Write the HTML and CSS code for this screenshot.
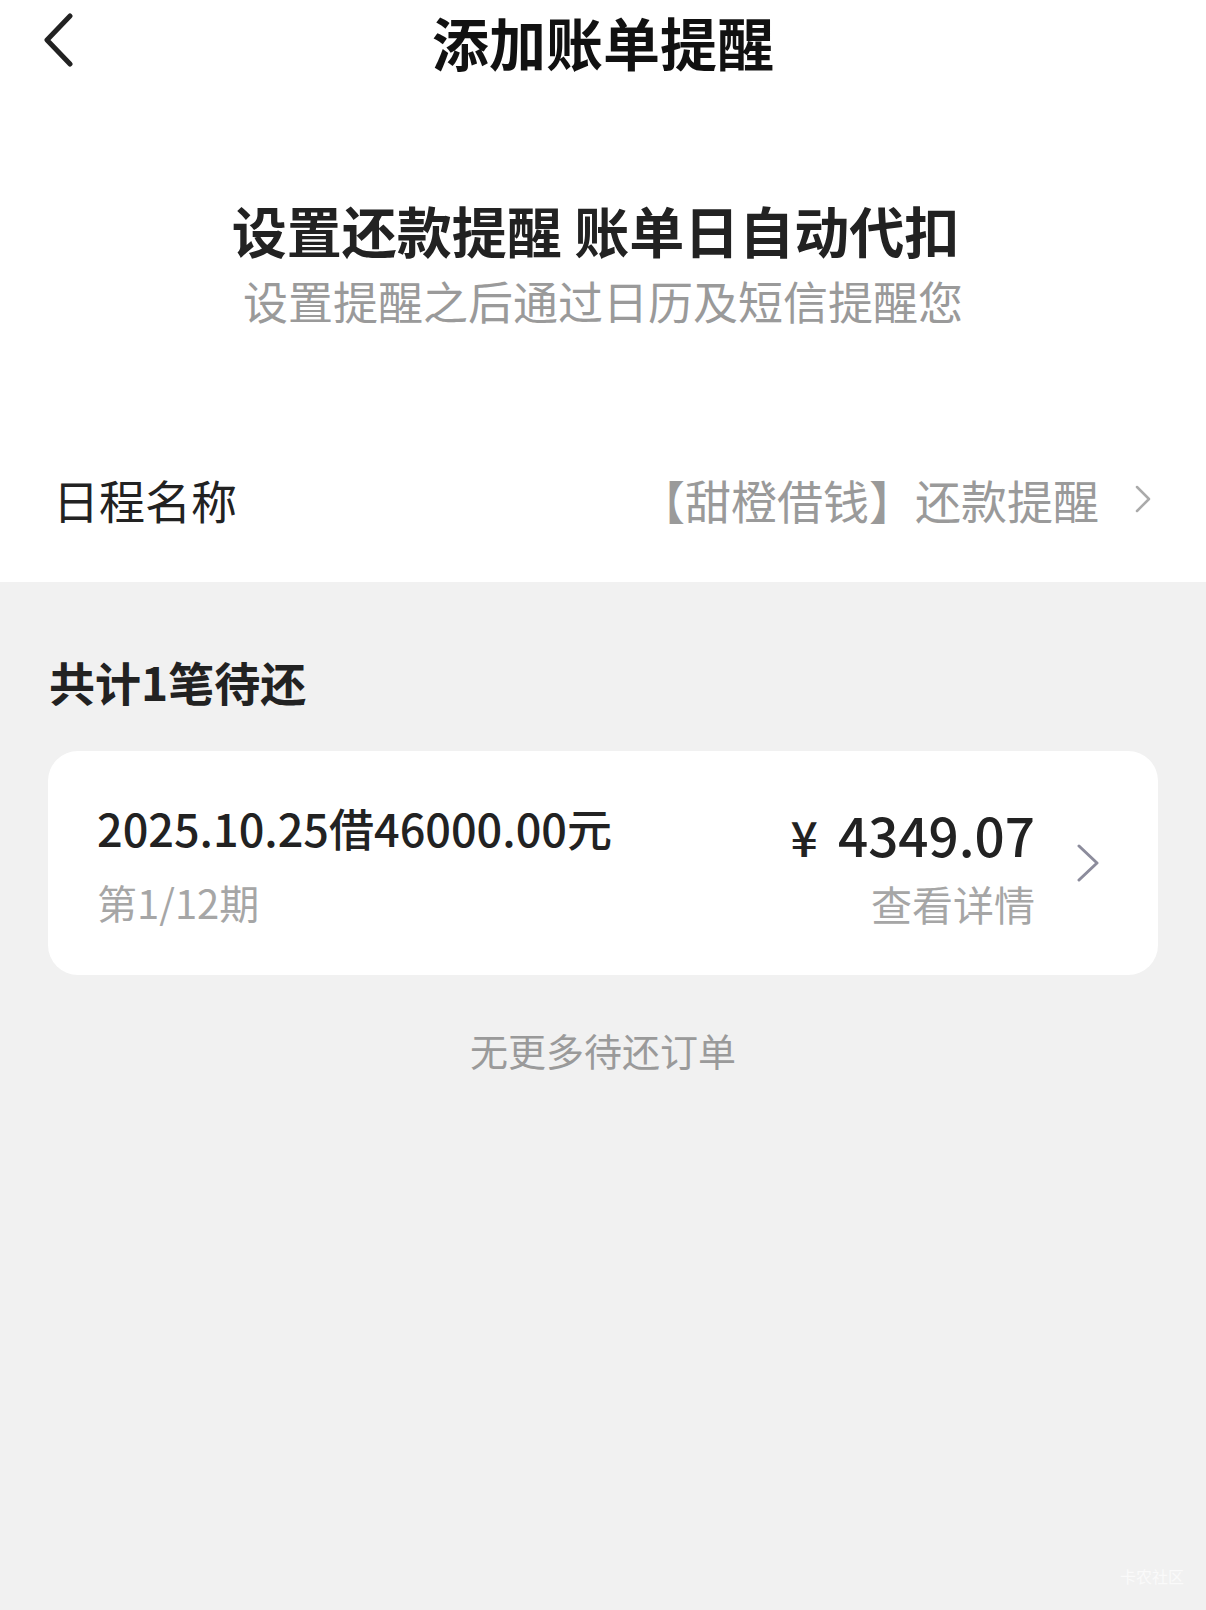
FILE: index.html
```html
<!DOCTYPE html>
<html lang="zh-CN">
<head>
<meta charset="utf-8">
<title>添加账单提醒</title>
<link rel="stylesheet" href="styles.css">
</head>
<body>
<div class="page">
  <section class="top">
    <header class="nav">
      <svg class="back" width="32" height="54" viewBox="0 0 32 54"><path d="M28 3 L5 27 L28 51" fill="none" stroke="#222" stroke-width="5" stroke-linecap="round" stroke-linejoin="round"/></svg>
      <h1 class="nav-title">添加账单提醒</h1>
    </header>
    <div class="hero">
      <h2 class="hero-title">设置还款提醒 账单日自动代扣</h2>
      <p class="hero-sub">设置提醒之后通过日历及短信提醒您</p>
    </div>
    <div class="row">
      <span class="row-label">日程名称</span>
      <span class="row-value">【甜橙借钱】还款提醒</span>
      <svg class="row-arrow" width="16" height="28" viewBox="0 0 16 28"><path d="M2 2 L14 14 L2 26" fill="none" stroke="#aaa" stroke-width="2.5" stroke-linecap="round" stroke-linejoin="round"/></svg>
    </div>
  </section>
  <section class="list">
    <h3 class="list-title">共计1笔待还</h3>
    <div class="card">
      <div class="card-left">
        <div class="card-main">2025.10.25借46000.00元</div>
        <div class="card-sub">第1/12期</div>
      </div>
      <div class="card-right">
        <div class="card-amount"><span class="yen">¥</span>4349.07</div>
        <div class="card-detail">查看详情</div>
      </div>
      <svg class="card-arrow" width="24" height="38" viewBox="0 0 24 38"><path d="M3 2 L21 19 L3 36" fill="none" stroke="#8c8c9c" stroke-width="3" stroke-linecap="round" stroke-linejoin="round"/></svg>
    </div>
    <p class="list-end">无更多待还订单</p>
  </section>
  <div class="watermark">卡农社区</div>
</div>
</body>
</html>
```

FILE: styles.css
```css
* { box-sizing: border-box; }
html, body { margin: 0; padding: 0; }
body {
  background: #f1f1f1;
  font-family: "Noto Sans CJK SC", "Noto Sans", sans-serif;
  color: #222;
}
.page {
  position: relative;
  min-height: 1610px;
  background: #f1f1f1;
}
.top {
  background: #fff;
  padding-bottom: 4px;
}
.nav {
  position: relative;
  height: 90px;
  display: flex;
  align-items: flex-start;
  justify-content: center;
}
.back {
  position: absolute;
  left: 42px;
  top: 13px;
}
.nav-title {
  margin: 0;
  font-size: 57px;
  line-height: 82px;
  font-weight: 700;
  color: #111;
}
.hero {
  padding-top: 104px;
  text-align: center;
}
.hero-title {
  margin: 0;
  padding-right: 15px;
  font-size: 55px;
  line-height: 70px;
  font-weight: 700;
  color: #222;
}
.hero-sub {
  margin: 9px 0 0;
  font-size: 45px;
  line-height: 56px;
  color: #9a9a9a;
}
.row {
  margin-top: 91px;
  height: 158px;
  display: flex;
  align-items: center;
  padding: 0 55px 0 53px;
}
.row-label {
  font-size: 46px;
  color: #222;
  flex: 1;
}
.row-value {
  font-size: 46px;
  color: #9a9a9a;
  margin-right: 36px;
}
.list {
  padding: 71px 48px 0;
}
.list-title {
  margin: 0 0 0 1px;
  font-size: 46px;
  line-height: 56px;
  font-weight: 700;
  color: #222;
}
.card {
  margin-top: 42px;
  background: #fff;
  border-radius: 30px;
  height: 224px;
  display: flex;
  align-items: center;
  padding: 0 58px 0 49px;
}
.card-left {
  flex: 1;
}
.card-main {
  font-size: 45px;
  line-height: 60px;
  font-weight: 500;
  color: #222;
}
.card-sub {
  margin-top: 18px;
  font-size: 40px;
  line-height: 52px;
  color: #a6a6a6;
}
.card-right {
  text-align: right;
  margin-right: 41px;
}
.card-amount {
  font-size: 53px;
  line-height: 74px;
  font-weight: 500;
  color: #222;
}
.yen {
  font-size: 48px;
  margin-right: 20px;
}
.card-detail {
  margin-top: 4px;
  font-size: 41px;
  line-height: 52px;
  color: #a6a6a6;
}
.list-end {
  margin: 50px 0 0;
  text-align: center;
  font-size: 38px;
  line-height: 50px;
  color: #9a9a9a;
}
.watermark {
  position: absolute;
  right: 22px;
  bottom: 22px;
  font-size: 16px;
  color: #fafafa;
}
```
